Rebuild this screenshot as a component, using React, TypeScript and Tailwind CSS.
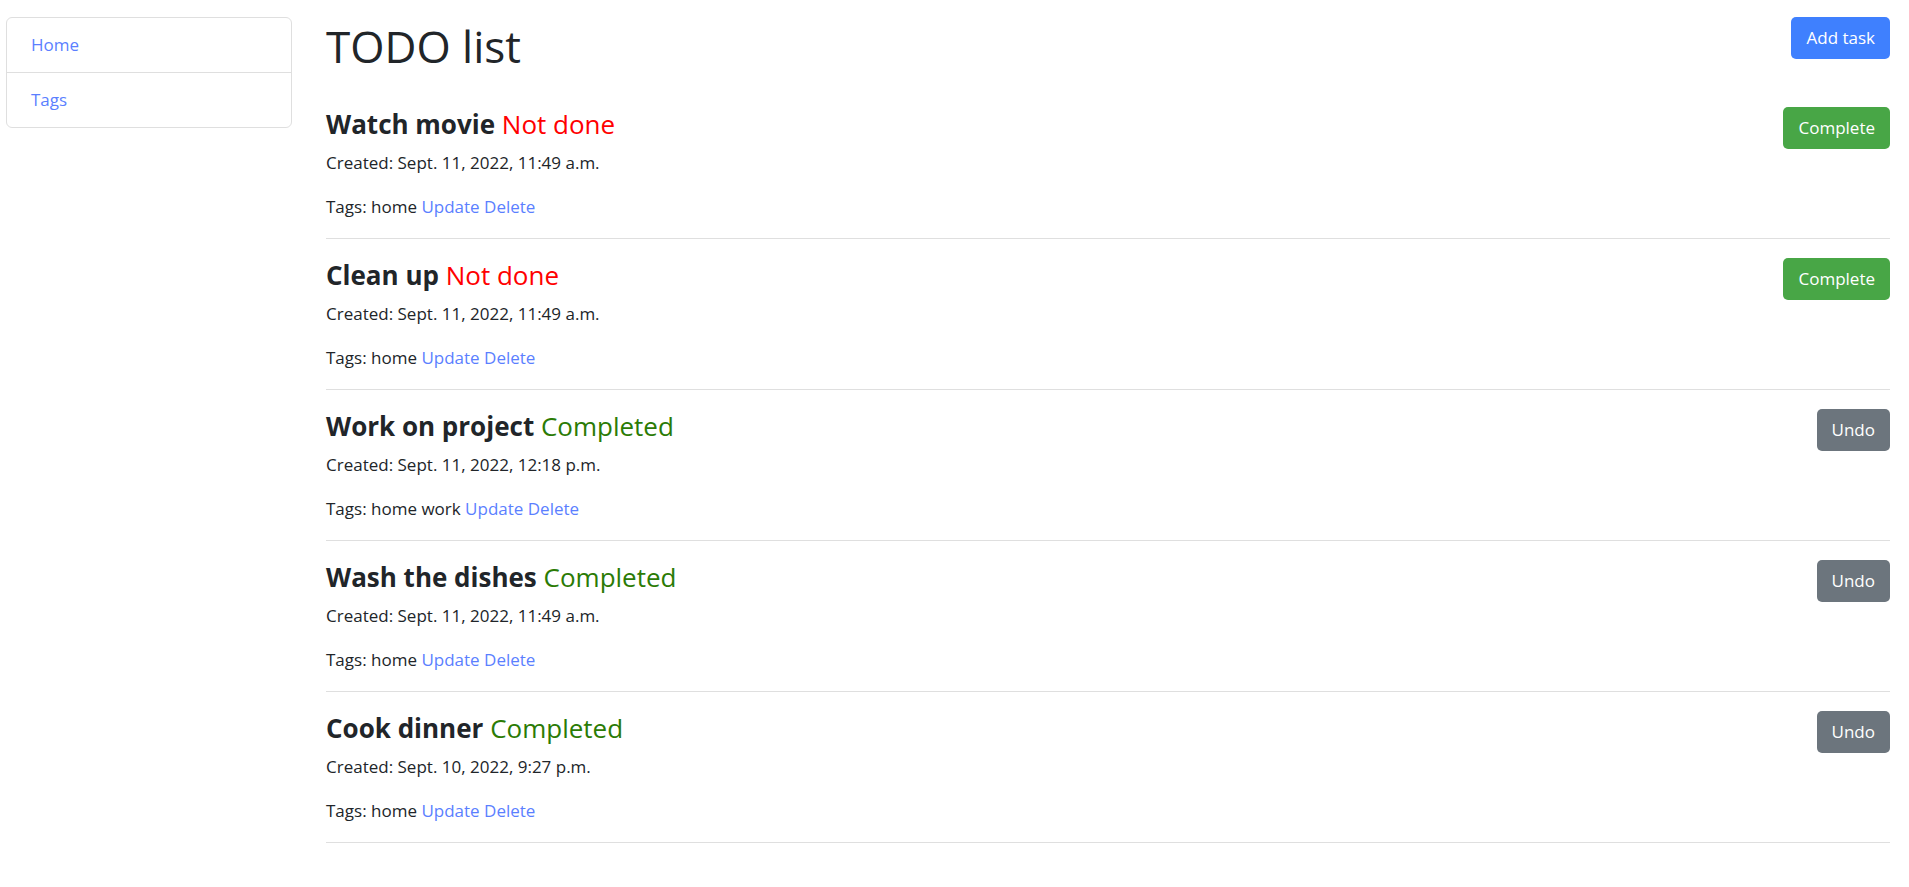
import React from 'react';

interface Task {
  title: string;
  done: boolean;
  created: string;
  tags: string;
}

const tasks: Task[] = [
  { title: 'Watch movie', done: false, created: 'Sept. 11, 2022, 11:49 a.m.', tags: 'home' },
  { title: 'Clean up', done: false, created: 'Sept. 11, 2022, 11:49 a.m.', tags: 'home' },
  { title: 'Work on project', done: true, created: 'Sept. 11, 2022, 12:18 p.m.', tags: 'home work' },
  { title: 'Wash the dishes', done: true, created: 'Sept. 11, 2022, 11:49 a.m.', tags: 'home' },
  { title: 'Cook dinner', done: true, created: 'Sept. 10, 2022, 9:27 p.m.', tags: 'home' },
];

const TaskRow: React.FC<{ task: Task }> = ({ task }) => (
  <div className="flex items-start justify-between border-b border-[#dfdfdf] pt-[19px] pb-[18px]">
    <div>
      <h4 className="text-[26px] leading-[34px] mb-2">
        <span className="font-bold">{task.title}</span>{' '}
        {task.done ? (
          <span className="text-[#2b7b05]">Completed</span>
        ) : (
          <span className="text-[#ff0000]">Not done</span>
        )}
      </h4>
      <p className="text-[17px] leading-[27px]">Created: {task.created}</p>
      <p className="text-[17px] leading-[27px] mt-[17px]">
        Tags: {task.tags}{' '}
        <a href="#" className="text-[#5b7fff]">Update</a>{' '}
        <a href="#" className="text-[#5b7fff]">Delete</a>
      </p>
    </div>
    {task.done ? (
      <button className="h-[42px] px-[15px] rounded-[5px] bg-[#6c757d] text-white text-[17px]">Undo</button>
    ) : (
      <button className="h-[42px] px-[15px] rounded-[5px] bg-[#48a646] text-white text-[17px]">Complete</button>
    )}
  </div>
);

export default function App() {
  return (
    <div
      className="min-h-screen bg-white text-[#212529] flex items-start pt-[17px] pl-[6px] pr-[19px]"
      style={{ fontFamily: '"Open Sans", "Noto Sans", sans-serif' }}
    >
      <nav className="w-[286px] shrink-0 border border-[#dfdfdf] rounded-[6px] text-[17px]">
        <a href="#" className="flex items-center h-[55px] px-6 text-[#5b7fff] border-b border-[#dfdfdf]">Home</a>
        <a href="#" className="flex items-center h-[54px] px-6 text-[#5b7fff]">Tags</a>
      </nav>
      <main className="flex-1 ml-[34px]">
        <div className="flex items-start justify-between h-[71px]">
          <h1 className="text-[44px] leading-[54px] mt-[2px] font-medium">TODO list</h1>
          <button className="h-[42px] px-[15px] rounded-[5px] bg-[#3f80fe] text-white text-[17px]">Add task</button>
        </div>
        {tasks.map((t) => (
          <TaskRow key={t.title} task={t} />
        ))}
      </main>
    </div>
  );
}
